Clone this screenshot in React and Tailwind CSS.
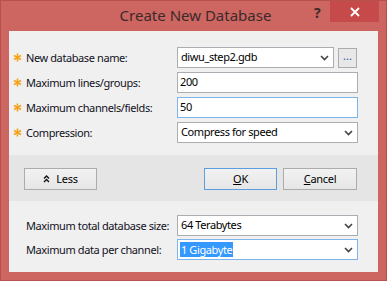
import React from "react";

const font = { fontFamily: '"Noto Sans", "Open Sans", sans-serif' };

function Chevron() {
  return (
    <svg width="9" height="6" viewBox="0 0 9 6" className="shrink-0">
      <path d="M1 1 L4.5 4.5 L8 1" fill="none" stroke="#444" strokeWidth="1.6" />
    </svg>
  );
}

function Star() {
  return (
    <svg width="9" height="9" viewBox="0 0 9 9" className="shrink-0 mr-[4px]">
      <path
        d="M4.5 0.5 V8.5 M1 2.5 L8 6.5 M8 2.5 L1 6.5"
        stroke="#f5a31a"
        strokeWidth="1.6"
        fill="none"
      />
    </svg>
  );
}

function Row({ star, label, children }) {
  return (
    <div className="flex items-center h-[21px]">
      <div className="flex items-center w-[168px] shrink-0 pl-[4px]">
        {star ? <Star /> : <span className="w-[13px] shrink-0" />}
        <span className="text-[11px] tracking-[-0.4px] text-[#10101c] leading-none whitespace-nowrap">{label}</span>
      </div>
      {children}
    </div>
  );
}

function Input({ value, focused, w = "w-[181px]" }) {
  return (
    <div
      className={
        "h-[21px] " + w + " bg-white border flex items-center px-[2px] text-[11px] tracking-[-0.4px] text-black " +
        (focused ? "border-[#7eb4ea]" : "border-[#abadb3]")
      }
    >
      {value}
    </div>
  );
}

function Combo({ value, focused, selected, w = "w-[181px]" }) {
  return (
    <div
      className={
        "h-[21px] " + w + " bg-white border flex items-center justify-between pl-[2px] pr-[4px] text-[11px] tracking-[-0.4px] text-black " +
        (focused ? "border-[#7eb4ea]" : "border-[#abadb3]")
      }
    >
      {selected ? (
        <span className="bg-[#3399ff] text-white px-[1px] leading-[15px]">{value}</span>
      ) : (
        <span className="pl-[1px]">{value}</span>
      )}
      <Chevron />
    </div>
  );
}

function Button({ children, w, def }) {
  return (
    <div
      className={
        "h-[22px] " + w + " flex items-center justify-center text-[11px] tracking-[-0.3px] text-black border bg-gradient-to-b from-[#f2f2f2] to-[#e6e6e6] " +
        (def ? "border-[#5d9ee0]" : "border-[#acacac]")
      }
    >
      {children}
    </div>
  );
}

export default function App() {
  return (
    <div style={font} className="w-[387px] h-[281px] bg-[#cd6561] border border-[#b7514e] flex flex-col">
      <div className="h-[30px] flex relative">
        <div className="flex-1 flex items-center justify-center pl-[4px] pb-[2px] text-[15px] text-[#3a2a2a]">
          Create New Database
        </div>
        <div className="absolute left-[313px] top-[5px] text-[14px] font-bold text-[#3a2a2a] leading-none">?</div>
        <div className="absolute left-[329px] top-0 w-[49px] h-[21px] bg-[#c64a4a] flex items-center justify-center">
          <svg width="10" height="10" viewBox="0 0 10 10">
            <path d="M1 1 L9 9 M9 1 L1 9" stroke="white" strokeWidth="1.8" />
          </svg>
        </div>
      </div>
      <div className="ml-[8px] w-[369px] h-[241px] bg-[#f0f0f0] flex flex-col">
        <div className="pt-[16px] pb-[12px] flex flex-col gap-[4px]">
          <Row star label="New database name:">
            <div className="flex items-center gap-[4px]">
              <Combo value="diwu_step2.gdb" w="w-[157px]" />
              <div className="w-[19px] h-[20px] border border-[#acacac] bg-[#e8e8e8] flex items-center justify-center text-[11px] text-[#2f4f9f] leading-none pb-[4px]">
                ...
              </div>
            </div>
          </Row>
          <Row star label="Maximum lines/groups:">
            <Input value="200" />
          </Row>
          <Row star label="Maximum channels/fields:">
            <Input value="50" focused />
          </Row>
          <Row star label="Compression:">
            <Combo value="Compress for speed" />
          </Row>
        </div>
        <div className="h-[46px] bg-[#e5e5e5] flex items-start pt-[13px]">
          <div className="ml-[15px]">
            <Button w="w-[73px]">
              <span className="flex items-center gap-[6px]">
                <svg width="7" height="8" viewBox="0 0 7 8">
                  <path d="M1 3.5 L3.5 1 L6 3.5 M1 7 L3.5 4.5 L6 7" fill="none" stroke="#111" strokeWidth="1.4" />
                </svg>
                Less
              </span>
            </Button>
          </div>
          <div className="ml-[107px]">
            <Button w="w-[73px]" def>
              <span>
                <span className="underline">O</span>K
              </span>
            </Button>
          </div>
          <div className="ml-[6px]">
            <Button w="w-[74px]">
              <span>
                <span className="underline">C</span>ancel
              </span>
            </Button>
          </div>
        </div>
        <div className="pt-[14px] flex flex-col gap-[3px]">
          <Row label="Maximum total database size:">
            <Combo value="64 Terabytes" />
          </Row>
          <Row label="Maximum data per channel:">
            <Combo value="1 Gigabyte" focused selected />
          </Row>
        </div>
      </div>
    </div>
  );
}
